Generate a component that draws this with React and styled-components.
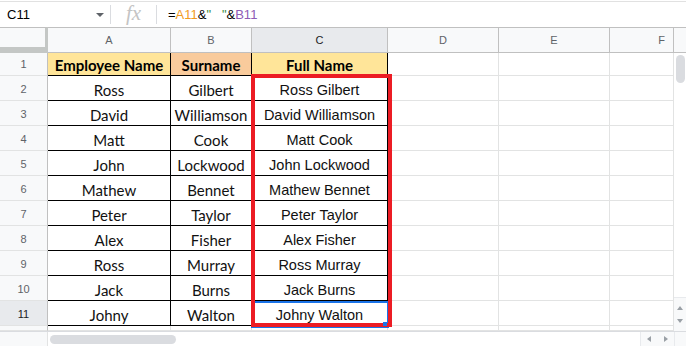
import React from "react";
import styled, { createGlobalStyle } from "styled-components";

const Global = createGlobalStyle`
  html, body { margin: 0; padding: 0; background: #fff; overflow: hidden; }
  * { box-sizing: border-box; }
`;

const Page = styled.div`
  width: 686px;
  height: 346px;
  overflow: hidden;
  background: #fff;
  font-family: "Liberation Sans", Arial, sans-serif;
  display: flex;
  flex-direction: column;
`;

const FormulaBar = styled.div`
  margin-top: 1px;
  height: 26px;
  border-top: 1px solid #e1e1e1;
  display: flex;
  align-items: center;
  flex-shrink: 0;
`;

const NameBox = styled.div`
  width: 110px;
  height: 100%;
  display: flex;
  align-items: center;
  padding-left: 7px;
  font-size: 13px;
  color: #000;
`;

const NameText = styled.span`
  flex: 1;
`;

const Caret = styled.span`
  width: 0;
  height: 0;
  border-left: 4px solid transparent;
  border-right: 4px solid transparent;
  border-top: 4px solid #5f6368;
  margin-right: 6px;
  margin-top: 1px;
`;

const Divider = styled.span`
  width: 1px;
  height: 19px;
  background: #dadce0;
`;

const Fx = styled.span`
  width: 45px;
  text-align: center;
  font-family: "Liberation Serif", "Times New Roman", serif;
  font-style: italic;
  font-size: 21px;
  color: #c4c4c4;
  line-height: 1;
  margin-top: -2px;
`;

const Formula = styled.div`
  padding-left: 11px;
  font-size: 13px;
  color: #000;
  white-space: pre;
`;

const Tok = styled.span`
  color: ${(p) => p.$c};
`;

const Body = styled.div`
  display: flex;
  flex-shrink: 0;
`;

const Sheet = styled.div`
  position: relative;
  width: 674px;
  display: grid;
  grid-template-columns: 48px 123px 81px 136px 111px 111px 64px;
  grid-template-rows: 26px 23px repeat(10, 25px) 5px;
  overflow: hidden;
`;

const Corner = styled.div`
  background: #f8f9fa;
  border-top: 1px solid #c0c0c0;
  border-right: 3px solid #c4c7c5;
  border-bottom: 6px solid #c4c7c5;
`;

const ColHead = styled.div`
  display: flex;
  align-items: center;
  justify-content: center;
  background: ${(p) => (p.$sel ? "#e8eaed" : "#f8f9fa")};
  border-top: 1px solid #c0c0c0;
  border-right: 1px solid #c0c0c0;
  border-bottom: 1px solid #c0c0c0;
  font-size: 11px;
  color: ${(p) => (p.$sel ? "#202124" : "#5f6368")};
  padding-left: ${(p) => (p.$edge ? "40px" : "0")};
`;

const RowHead = styled.div`
  display: flex;
  align-items: center;
  justify-content: center;
  background: ${(p) => (p.$sel ? "#e8eaed" : "#f8f9fa")};
  border-right: 1px solid #c0c0c0;
  border-bottom: 1px solid #e2e3e3;
  font-size: 11px;
  color: ${(p) => (p.$sel ? "#202124" : "#5f6368")};
  padding-top: ${(p) => (p.$first ? "0" : "2px")};
`;

const Cell = styled.div`
  display: flex;
  align-items: center;
  justify-content: center;
  border-right: 1px solid ${(p) => (p.$table ? "#000" : "#e2e3e3")};
  border-bottom: 1px solid ${(p) => (p.$table ? "#000" : "#e2e3e3")};
  background: ${(p) => p.$bg || "#fff"};
  font-family: ${(p) =>
    p.$arial ? '"Liberation Sans", Arial, sans-serif' : 'Lato, "Open Sans", sans-serif'};
  font-size: ${(p) => (p.$arial ? "14.5px" : "15px")};
  font-weight: ${(p) => (p.$bold ? 700 : 400)};
  color: ${(p) => (p.$bold ? "#000" : "#111")};
  white-space: nowrap;
  overflow: hidden;
  padding-top: ${(p) => (p.$bold ? "1px" : "3px")};
`;

const Selection = styled.div`
  position: absolute;
  left: 251px;
  top: 274px;
  width: 138px;
  height: 27px;
  border: 2px solid #1a73e8;
  pointer-events: none;
`;

const Highlight = styled.div`
  position: absolute;
  left: 251px;
  top: 47px;
  width: 141px;
  height: 253px;
  border: 4.5px solid #ec1c24;
  pointer-events: none;
`;

const Handle = styled.div`
  position: absolute;
  left: 383px;
  top: 295px;
  width: 4px;
  height: 4px;
  background: #1a73e8;
`;

const VScroll = styled.div`
  width: 12px;
  display: flex;
  flex-direction: column;
  background: #fff;
`;

const VHead = styled.div`
  height: 26px;
  background: #f8f9fa;
  border-top: 1px solid #c0c0c0;
  border-bottom: 1px solid #c0c0c0;
`;

const VThumb = styled.div`
  margin: 2px 1px 0 2px;
  height: 28px;
  border-radius: 5px;
  background: #dadce0;
`;

const Spacer = styled.div`
  flex: 1;
`;

const ArrowBox = styled.div`
  height: 34px;
  border-top: 1px solid #e8eaed;
  background: #f8f9fa;
  display: flex;
  flex-direction: column;
  align-items: center;
  justify-content: space-around;
  padding: 3px 0;
`;

const Arrow = styled.span`
  width: 0;
  height: 0;
  ${(p) =>
    p.$dir === "up" &&
    "border-left:3px solid transparent;border-right:3px solid transparent;border-bottom:4px solid #9aa0a6;"}
  ${(p) =>
    p.$dir === "down" &&
    "border-left:3px solid transparent;border-right:3px solid transparent;border-top:4px solid #9aa0a6;"}
  ${(p) =>
    p.$dir === "left" &&
    "border-top:3px solid transparent;border-bottom:3px solid transparent;border-right:4px solid #9aa0a6;"}
  ${(p) =>
    p.$dir === "right" &&
    "border-top:3px solid transparent;border-bottom:3px solid transparent;border-left:4px solid #9aa0a6;"}
`;

const HScroll = styled.div`
  height: 15px;
  display: flex;
  border-top: 1px solid #dadce0;
  flex-shrink: 0;
`;

const HLeft = styled.div`
  width: 48px;
  background: #f8f9fa;
  border-right: 1px solid #e2e3e3;
`;

const HTrack = styled.div`
  flex: 1;
  display: flex;
  align-items: center;
  padding-left: 2px;
`;

const HThumb = styled.div`
  width: 126px;
  height: 9px;
  border-radius: 5px;
  background: #dadce0;
`;

const HArrows = styled.div`
  width: 34px;
  display: flex;
  align-items: center;
  justify-content: space-around;
  background: #f8f9fa;
  border-left: 1px solid #e8eaed;
`;

const HCorner = styled.div`
  width: 12px;
  background: #f8f9fa;
  border-left: 1px solid #e8eaed;
`;

const people = [
  ["Ross", "Gilbert"],
  ["David", "Williamson"],
  ["Matt", "Cook"],
  ["John", "Lockwood"],
  ["Mathew", "Bennet"],
  ["Peter", "Taylor"],
  ["Alex", "Fisher"],
  ["Ross", "Murray"],
  ["Jack", "Burns"],
  ["Johny", "Walton"],
];

const cols = ["A", "B", "C", "D", "E", "F"];

export default function App() {
  return (
    <Page>
      <Global />
      <FormulaBar>
        <NameBox>
          <NameText>C11</NameText>
          <Caret />
        </NameBox>
        <Divider />
        <Fx>fx</Fx>
        <Divider />
        <Formula>
          =<Tok $c="#f29b1d">A11</Tok>&amp;<Tok $c="#3d8b40">"</Tok>   <Tok $c="#3d8b40">"</Tok>&amp;
          <Tok $c="#8e5bb5">B11</Tok>
        </Formula>
      </FormulaBar>
      <Body>
        <Sheet>
          <Corner />
          {cols.map((c) => (
            <ColHead key={c} $sel={c === "C"} $edge={c === "F"}>
              {c}
            </ColHead>
          ))}

          <RowHead $first>1</RowHead>
          <Cell $table $bold $bg="#ffe599">Employee Name</Cell>
          <Cell $table $bold $bg="#f9cb9c">Surname</Cell>
          <Cell $table $bold $bg="#ffe599">Full Name</Cell>
          <Cell />
          <Cell />
          <Cell />

          {people.map(([first, last], i) => (
            <React.Fragment key={i}>
              <RowHead $sel={i === 9}>{i + 2}</RowHead>
              <Cell $table>{first}</Cell>
              <Cell $table>{last}</Cell>
              <Cell $table $arial>
                {first} {last}
              </Cell>
              <Cell />
              <Cell />
              <Cell />
            </React.Fragment>
          ))}

          <RowHead />
          <Cell />
          <Cell />
          <Cell />
          <Cell />
          <Cell />
          <Cell />

          <Selection />
          <Highlight />
          <Handle />
        </Sheet>
        <VScroll>
          <VHead />
          <VThumb />
          <Spacer />
          <ArrowBox>
            <Arrow $dir="up" />
            <Arrow $dir="down" />
          </ArrowBox>
        </VScroll>
      </Body>
      <HScroll>
        <HLeft />
        <HTrack>
          <HThumb />
        </HTrack>
        <HArrows>
          <Arrow $dir="left" />
          <Arrow $dir="right" />
        </HArrows>
        <HCorner />
      </HScroll>
    </Page>
  );
}
